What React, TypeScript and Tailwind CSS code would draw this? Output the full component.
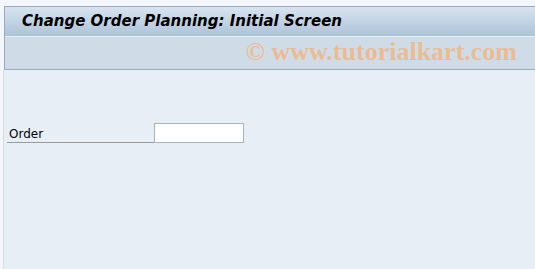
export default function App() {
  return (
    <div className="w-[535px] h-[269px] bg-[#f3f6fa] pt-[6px] overflow-hidden flex flex-col font-['Tahoma','DejaVu_Sans',sans-serif]">
      {/* header block */}
      <div className="ml-[4px] border-l border-t border-b border-[#9aabbf] shadow-[inset_1px_0_0_#f4f8fc]">
        <div className="h-[30px] bg-gradient-to-b from-[#d8e4ef] to-[#adc3d9] flex items-center pl-[17px] border-b border-[#e6eef6]">
          <h1 className="text-[15px] font-bold italic text-black font-['DejaVu_Sans',sans-serif]">
            Change Order Planning: Initial Screen
          </h1>
        </div>
        <div className="h-[32px] bg-[#cfdce8] flex items-center justify-end pr-[18px] pb-[3px]">
          <span className="text-[26px] leading-none font-bold text-[#ebbc93] font-['Liberation_Serif',serif]">
            © www.tutorialkart.com
          </span>
        </div>
      </div>
      {/* body */}
      <div className="flex-1 ml-[3px] border-l border-[#e0d8dc] bg-[#e8eef6] pt-[53px] pl-[3px]">
        <div className="flex items-end">
          <label className="w-[147px] h-[20px] border-b border-[#9a9a9a] text-[12px] leading-none text-black pl-[2px] flex items-end pb-[2px] font-['DejaVu_Sans',sans-serif]">
            Order
          </label>
          <input
            type="text"
            className="w-[90px] h-[20px] bg-white border border-[#a9b3be] outline-none text-[12px] px-1"
          />
        </div>
      </div>
    </div>
  );
}
